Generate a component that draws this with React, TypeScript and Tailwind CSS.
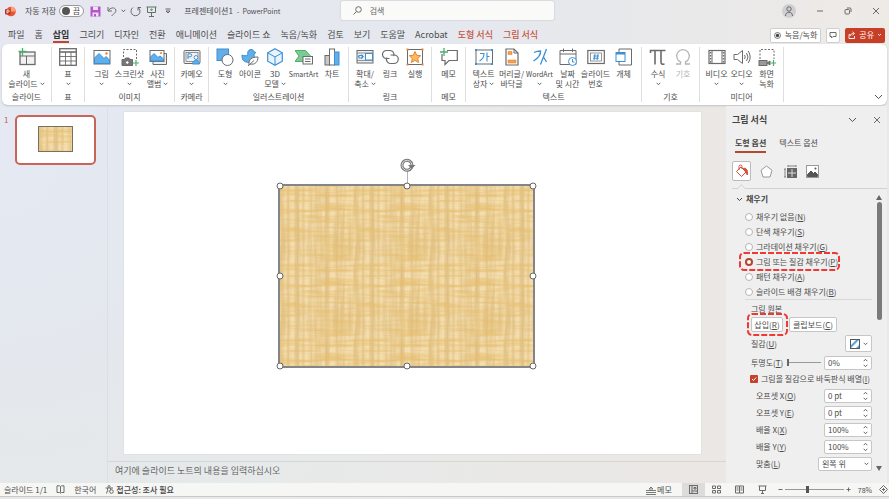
import React from "react";

type Kids = { children?: React.ReactNode };

const G = "#6b6b6b";
const B = "#3b8fd6";

function Ico({ children, s = 18 }: Kids & { s?: number }) {
  return (
    <svg width={s} height={s} viewBox={`0 0 ${s} ${s}`} fill="none" stroke={G} strokeWidth="1" aria-hidden="true" className="shrink-0">
      {children}
    </svg>
  );
}

function Chevron({ className = "" }: { className?: string }) {
  return (
    <svg width="5" height="4" viewBox="0 0 5 4" fill="none" stroke="#555" strokeWidth="0.9" aria-hidden="true" className={`shrink-0 ${className}`}>
      <path d="M0.7 0.8 2.5 2.7 4.3 0.8" />
    </svg>
  );
}

function BigChevron() {
  return (
    <svg width="9" height="6" viewBox="0 0 9 6" fill="none" stroke="#555" strokeWidth="1" aria-hidden="true">
      <path d="M1 1 4.5 4.6 8 1" />
    </svg>
  );
}

const icons: Record<string, React.ReactNode> = {
  newSlide: (
    <Ico>
      <rect x="2" y="4" width="15" height="12.500" fill="#f2f2f2" strokeWidth="1.3" />
      <path d="M2 8h15M8.5 8V16.500" />
      <path d="M4.500 0v8M0.5 3.500h8" stroke="#4caf6a" strokeWidth="1.3" />
    </Ico>
  ),
  table: (
    <Ico>
      <rect x="0.7" y="0.7" width="16.6" height="16.6" fill="#fff" strokeWidth="1.3" />
      <path d="M1 4h16" strokeWidth="1.6" />
      <path d="M1 8.5h16M1 13h16M6.500 4v14M12 4v14" strokeWidth="0.9" />
    </Ico>
  ),
  picture: (
    <Ico>
      <rect x="1" y="2.5" width="16" height="13.5" fill="#fff" />
      <path d="M1.5 10 6 5.5l5 5 2-2 3.500 3.500v3.500h-15z" fill="#62aee8" stroke={B} />
      <circle cx="13.500" cy="5.500" r="1.200" fill="#e8823a" stroke="none" />
    </Ico>
  ),
  screenshot: (
    <Ico>
      <path d="M2.500 9V1.500h13V11" strokeDasharray="2 1.500" />
      <path d="M1 11.500h2.500l1-1.500h3.500l1 1.500h2.500v6H1z" fill="#777" />
      <circle cx="6.300" cy="14.500" r="1.800" fill="#fff" />
      <path d="M15 12v6M12 15h6" stroke="#4caf6a" strokeWidth="1.200" />
    </Ico>
  ),
  album: (
    <Ico>
      <path d="M4 14v2.500h13.500V5.500H15" fill="#eee" />
      <rect x="1" y="2.500" width="14" height="11" fill="#fff" />
      <path d="M1.500 9 5 5.500l4 4 2-1.500 3.500 3v2h-13z" fill="#62aee8" stroke={B} />
      <circle cx="12" cy="5" r="1" fill="#e8823a" stroke="none" />
    </Ico>
  ),
  cameo: (
    <Ico>
      <rect x="1" y="2.500" width="16" height="13" rx="1" fill="#f1f1f1" />
      <rect x="3" y="4.500" width="12" height="9" strokeWidth="0.700" />
      <path d="M5 11V5.800h2.200a1.500 1.500 0 0 1 0 3H5" stroke={B} />
      <circle cx="13" cy="9.500" r="1.900" fill="#fff" stroke={B} />
      <path d="M9.500 16c0-5 7-5 7 0z" fill="#62aee8" stroke={B} />
    </Ico>
  ),
  shapes: (
    <Ico>
      <rect x="1" y="1" width="11.500" height="11.500" fill="#62aee8" stroke={B} />
      <circle cx="11.500" cy="12" r="5.500" fill="#fff" />
    </Ico>
  ),
  duck: (
    <Ico>
      <path d="M1 7c2 1 4 1 6 0-1-2 0-5.500 3-5.500 2 0 3 1.300 3 2.500l2 .5-2 1.500c0 2 2 4-1 7-3 2.500-8 1.500-10-1-1-1.500-1-3-1-5z" fill="#62aee8" stroke={B} />
      <path d="M8 17c-.5-6 3-8 9-8 0 5-3 8-8 7M7 18l6-5.500" fill="#fff" />
    </Ico>
  ),
  cube: (
    <Ico>
      <path d="M9 .8 16.300 4.800v8.400L9 17.200 1.700 13.200V4.800z" fill="#e9f4fc" stroke={B} strokeWidth="1.200" />
      <path d="M1.700 4.800 9 9l7.300-4.200M9 9v8" stroke={B} />
    </Ico>
  ),
  smartart: (
    <Ico>
      <path d="M0 2.500h10.500l5 5.500-5 5.500H0L4 8z" fill="#7ccb94" stroke="#4caf6a" />
      <rect x="8" y="8.500" width="9.500" height="7.500" fill="#fff" />
      <path d="M10 11h5.500M10 13.500h5.500" />
    </Ico>
  ),
  chart: (
    <Ico>
      <rect x="2" y="7.500" width="4.500" height="9.500" fill="#c9c9c9" />
      <rect x="6.500" y="1" width="5" height="16" fill="#fff" />
      <rect x="11.500" y="4" width="4.500" height="13" fill="#62aee8" stroke={B} />
    </Ico>
  ),
  zoom: (
    <Ico>
      <rect x="1" y="2.500" width="16" height="12.500" fill="#eee" />
      <path d="M1 5h16M1 12.500h16" strokeWidth=".7" />
      <path d="M2 8.500h5M5.500 6.500l2 2-2 2" stroke={B} />
      <rect x="9.500" y="5.500" width="7" height="6.500" fill="#fff" stroke={B} />
      <rect x="3" y="7.500" width="3" height="2.500" fill="#fff" stroke={B} />
    </Ico>
  ),
  link: (
    <Ico>
      <path d="M8.500 10.500H5.500a4 4 0 0 1 0-8H9a4 4 0 0 1 3.700 5.500" strokeWidth="1.200" />
      <path d="M9.500 7H13a4 4 0 0 1 0 8.500H9.500A4 4 0 0 1 6 9.500" strokeWidth="1.200" />
    </Ico>
  ),
  action: (
    <Ico>
      <rect x="1.500" y="1.500" width="15" height="15" fill="#fff" />
      <path d="m9 3.500 1.700 3.800 4 .4-3 2.800.9 4L9 12.400l-3.600 2.100.9-4-3-2.800 4-.4z" fill="#f8bd57" stroke="#e8823a" />
      <path d="M.5.500h2v2h-2zM15.500.500h2v2h-2zM.5 15.500h2v2h-2zM15.500 15.500h2v2h-2z" fill="#e8823a" stroke="none" />
    </Ico>
  ),
  comment: (
    <Ico>
      <path d="M2 6v6.500h3V16.500L9 12.500h8.300V2.500H7" fill="#fff" strokeWidth="1.200" />
      <path d="M4 0v8M0 4h8" stroke="#4caf6a" strokeWidth="1.300" />
    </Ico>
  ),
  textbox: (
    <Ico>
      <rect x="1" y="2" width="16.500" height="14" fill="#fff" stroke={G} />
      <path d="M5 5.500h4c0 3-1.500 6-4.500 7.500M12 4.500V13.500M12 8.500h2.500" stroke={B} strokeWidth="1.100" />
      <path d="M0 1h2v2H0zM16 1h2v2h-2zM0 15h2v2H0zM16 15h2v2h-2z" fill={B} stroke="none" />
    </Ico>
  ),
  header: (
    <Ico>
      <path d="M3 1h8l4 4v12H3z" fill="#fff" strokeWidth="1.200" />
      <path d="M11 1v4h4" />
      <path d="M5 3.500h4v3H5zM5 12h8v3H5z" fill="#f5a04a" stroke="#e8823a" strokeWidth=".6" />
    </Ico>
  ),
  wordart: (
    <Ico>
      <path d="M3 4.500c3-1.500 5-1.500 6.500-1.500C10 7 6.500 10.500 2.500 13" stroke={B} strokeWidth="1.300" />
      <path d="M15.500 1 9.500 16.500M12.500 9l3 5" stroke={B} strokeWidth="1.300" />
    </Ico>
  ),
  date: (
    <Ico>
      <path d="M1 2.500h16v14H1z" fill="#fff" />
      <path d="M1 6h16M4.500.500v3.500M13.500.500v3.500" />
      <circle cx="13.500" cy="13.500" r="4" fill="#fff" stroke={B} />
      <path d="M13.500 11v3h2" stroke={B} />
    </Ico>
  ),
  number: (
    <Ico>
      <rect x=".800" y="2.500" width="16.500" height="13" fill="#fff" strokeWidth="1.200" />
      <rect x="3.500" y="5" width="11" height="8" strokeWidth=".7" />
      <path d="M8 6 7 12M11 6l-1 6M6.200 8h5.800M6 10.200h5.800" stroke={B} />
    </Ico>
  ),
  object: (
    <Ico>
      <path d="M4 4V1h12.500v16H4v-3" fill="#fff" />
      <rect x="1" y="4.500" width="9" height="9" fill="#fff" stroke={B} />
      <path d="M1 5.500h9" stroke={B} strokeWidth="2" />
    </Ico>
  ),
  pi: (
    <Ico>
      <path d="M1.500 5V2.500h15M6 2.500V16.500M12 2.500V14c0 2 1 2.500 3.500 2" strokeWidth="1.600" />
    </Ico>
  ),
  omega: (
    <Ico>
      <path d="M2 16h4.500v-2.200A6.300 6.300 0 1 1 11.500 13.800V16H16" stroke="#b5b5b5" strokeWidth="1.300" />
    </Ico>
  ),
  video: (
    <Ico>
      <rect x="1" y="2.500" width="16" height="13" fill="#fff" strokeWidth="1.200" />
      <path d="M4 3v12M14 3v12" />
      <path d="M2.500 4v11M15.500 4v11" strokeDasharray="1.500 1.500" strokeWidth="1.400" />
    </Ico>
  ),
  audio: (
    <Ico>
      <path d="M1 6.500h3.500L9.500 2.500v13L4.500 11.500H1z" fill="#fff" />
      <path d="M11.500 7q1.500 2 0 4M13.500 5q3 4 0 8M15.200 3q4 6 0 12" />
    </Ico>
  ),
  record: (
    <Ico>
      <path d="M2 11V1.500h14V11" strokeDasharray="2 1.500" />
      <rect x="1" y="12.500" width="8" height="5" fill="#999" />
      <path d="M9 15 12 13v4z" fill="#777" />
      <path d="M15.500 12v6M12.500 15h6" stroke="#4caf6a" strokeWidth="1.200" />
    </Ico>
  ),
};

type Item = { icon: string; a: string; b?: string; drop?: boolean; w: string; muted?: boolean; latin?: boolean };
type GroupData = { label: string; w: string; items: Item[] };

const W25 = "w-[25px]";
const W28 = "w-7";
const groups: GroupData[] = [
  { label: "슬라이드", w: "w-[50px]", items: [{ icon: "newSlide", a: "새", b: "슬라이드", drop: true, w: "w-10" }] },
  { label: "표", w: "w-[33px]", items: [{ icon: "table", a: "표", drop: true, w: W28 }] },
  {
    label: "이미지", w: "w-[90px]", items: [
      { icon: "picture", a: "그림", drop: true, w: W28 },
      { icon: "screenshot", a: "스크린샷", drop: true, w: W28 },
      { icon: "album", a: "사진", b: "앨범", drop: true, w: W28 },
    ],
  },
  { label: "카메라", w: "w-[34px]", items: [{ icon: "cameo", a: "카메오", drop: true, w: W28 }] },
  {
    label: "일러스트레이션", w: "w-[140px]", items: [
      { icon: "shapes", a: "도형", drop: true, w: W25 },
      { icon: "duck", a: "아이콘", w: W25 },
      { icon: "cube", a: "3D", b: "모델", drop: true, w: W25 },
      { icon: "smartart", a: "SmartArt", w: "w-8", latin: true },
      { icon: "chart", a: "차트", w: W25 },
    ],
  },
  {
    label: "링크", w: "w-[83px]", items: [
      { icon: "zoom", a: "확대/", b: "축소", drop: true, w: W25 },
      { icon: "link", a: "링크", w: W25 },
      { icon: "action", a: "실행", w: W25 },
    ],
  },
  { label: "메모", w: "w-[34px]", items: [{ icon: "comment", a: "메모", w: W28 }] },
  {
    label: "텍스트", w: "w-[176px]", items: [
      { icon: "textbox", a: "텍스트", b: "상자", drop: true, w: W28 },
      { icon: "header", a: "머리글/", b: "바닥글", w: W28 },
      { icon: "wordart", a: "WordArt", drop: true, w: W28, latin: true },
      { icon: "date", a: "날짜", b: "및 시간", w: W28 },
      { icon: "number", a: "슬라이드", b: "번호", w: W28 },
      { icon: "object", a: "개체", w: W28 },
    ],
  },
  {
    label: "기호", w: "w-[58px]", items: [
      { icon: "pi", a: "수식", drop: true, w: W25 },
      { icon: "omega", a: "기호", w: W25, muted: true },
    ],
  },
  {
    label: "미디어", w: "w-[84px]", items: [
      { icon: "video", a: "비디오", drop: true, w: W25 },
      { icon: "audio", a: "오디오", drop: true, w: W25 },
      { icon: "record", a: "화면", b: "녹화", w: W25 },
    ],
  },
];

function RibbonButton({ it }: { it: Item }) {
  return (
    <button className={`flex flex-col items-center ${it.w} ${it.muted ? "text-[#b5b5b5]" : ""}`}>
      {icons[it.icon]}
      <span className={`mt-[3px] h-2.5 whitespace-nowrap ${it.latin ? "text-[7px]" : ""}`}>{it.a}</span>
      <span className="flex h-2.5 items-center gap-0.5 whitespace-nowrap">
        {it.b}
        {it.drop && <Chevron />}
      </span>
    </button>
  );
}

function TitleBar() {
  return (
    <header className="flex h-[22px] shrink-0 items-center">
      <div className="flex min-w-0 flex-[103] items-center pl-[5px] whitespace-nowrap">
        <svg width="11" height="11" viewBox="0 0 11 11" aria-hidden="true">
          <circle cx="6" cy="5.500" r="4.800" fill="#e8562f" />
          <path d="M6 .7a4.800 4.800 0 0 1 4.800 4.800H6z" fill="#f7a17c" />
          <rect x="0" y="3" width="5.500" height="5.500" rx="1" fill="#b8301c" />
          <path d="M2 7.500V4h1.200a1 1 0 0 1 0 2.200H2" stroke="#fff" strokeWidth=".8" fill="none" />
        </svg>
        <span className="ml-[9px]">자동 저장</span>
        <button aria-label="자동 저장" className="ml-[3px] flex h-3 w-[25px] items-center justify-between rounded-full border border-[#999] bg-white pr-[3px] pl-[2px]">
          <span className="size-2 rounded-full bg-[#555]" />
          <span>끔</span>
        </button>
        <button aria-label="저장" className="ml-1.5">
          <svg width="11" height="11" viewBox="0 0 11 11" aria-hidden="true">
            <path d="M.5.500h10v10H.500z" fill="#b458c8" />
            <path d="M3 .5h5v3.500H3zM2.500 6.500h6v4h-6z" fill="#f1ddf5" />
            <path d="M4 8h2v2.500H4z" fill="#b458c8" />
          </svg>
        </button>
        <button aria-label="실행 취소" className="ml-1.5 flex items-center gap-1">
          <Ico s={10}>
            <path d="M1 1v4h4M1.200 4.800C3 1.500 8 .8 8.800 4c.6 2.500-2 3.500-4.300 6" />
          </Ico>
          <Chevron />
        </button>
        <button aria-label="다시 실행" className="ml-1">
          <Ico s={11}>
            <path d="M3 1.500a4.500 4.500 0 1 0 5 0M8 4.500v-3h3" />
          </Ico>
        </button>
        <button aria-label="슬라이드 쇼" className="ml-[5px]">
          <Ico s={11}>
            <path d="M.5 1h10M1.500 1v5.500h8V1M5.500 6.500v4M3 10.500h5" />
            <path d="M5.500 2.500v2.500M4 3.700h3" stroke="#4caf6a" />
          </Ico>
        </button>
        <button aria-label="빠른 실행 도구 모음" className="ml-2">
          <svg width="6" height="6" viewBox="0 0 6 6" fill="none" stroke="#666" aria-hidden="true">
            <path d="M.5 1h5M1 3l2 2 2-2z" />
          </svg>
        </button>
        <h1 className="ml-[13px] flex gap-1">
          프레젠테이션1 <span className="text-[7px]">-&nbsp; PowerPoint</span>
        </h1>
      </div>
      <label className="mt-px flex h-[19px] w-[24%] items-center gap-2 self-start rounded-xs bg-[#fafaf9] px-3 shadow-[0_0_2px_#b8b8c0]">
        <Ico s={9}>
          <circle cx="5.500" cy="3.500" r="2.800" />
          <path d="M3.500 5.500.500 8.500" />
        </Ico>
        <input type="text" placeholder="검색" aria-label="검색" className="min-w-0 flex-1 bg-transparent text-[8px] outline-none placeholder:text-[#666]" />
      </label>
      <div className="flex flex-[100] items-center justify-end gap-5 pr-[9px]">
        <button aria-label="계정" className="flex size-3.5 items-center justify-center rounded-full bg-[#cfcfd1]">
          <Ico s={10}>
            <circle cx="5" cy="3" r="2.200" />
            <path d="M1.500 10c0-5 7-5 7 0" />
          </Ico>
        </button>
        <button aria-label="최소화"><Ico s={8}><path d="M1 4h6" /></Ico></button>
        <button aria-label="이전 크기로"><Ico s={8}><rect x="1" y="2.500" width="4.500" height="4.500" rx="1" /><path d="M3 1h3a1 1 0 0 1 1 1v3" /></Ico></button>
        <button aria-label="닫기"><Ico s={8}><path d="m1 1 6 6M7 1 1 7" /></Ico></button>
      </div>
    </header>
  );
}

const tabs = ["파일", "홈", "삽입", "그리기", "디자인", "전환", "애니메이션", "슬라이드 쇼", "녹음/녹화", "검토", "보기", "도움말", "Acrobat", "도형 서식", "그림 서식"];

function TabRow() {
  return (
    <div className="flex h-[22px] shrink-0 items-center justify-between pt-1 pr-1 pl-2">
      <nav className="flex gap-2.5 text-[9px] whitespace-nowrap">
        {tabs.map((t) => (
          <a
            key={t}
            href="#"
            className={`h-4 pt-[3px] ${t === "삽입" ? "border-b-2 border-[#c2452f] font-bold text-[#333]" : t.endsWith("서식") ? "font-medium text-[#c8543f]" : ""}`}
          >
            {t}
          </a>
        ))}
      </nav>
      <div className="flex gap-[5px] whitespace-nowrap">
        <button className="flex h-[15px] items-center gap-1 rounded-xs border border-[#cfcfcf] bg-white px-[3px]">
          <svg width="7" height="7" viewBox="0 0 7 7" aria-hidden="true">
            <circle cx="3.500" cy="3.500" r="3" fill="none" stroke="#555" strokeWidth=".8" />
            <circle cx="3.500" cy="3.500" r="1.700" fill="#444" />
          </svg>
          녹음/녹화
        </button>
        <button aria-label="메모" className="flex h-[15px] w-3.5 items-center justify-center rounded-xs border border-[#cfcfcf] bg-white">
          <Ico s={8}><path d="M1 1.500h6v4H4L2.500 7V5.500H1z" /></Ico>
        </button>
        <button className="flex h-[15px] items-center gap-[3px] rounded-xs bg-[#c73f27] px-[3px] text-white">
          <svg width="8" height="8" viewBox="0 0 8 8" fill="none" stroke="#fff" strokeWidth=".9" aria-hidden="true">
            <path d="M2 3.500H1v4h5.500V5M2.500 5c0-2 1-2.500 3-2.500M4.500.800l2 1.700-2 1.700" />
          </svg>
          공유
          <svg width="5" height="4" viewBox="0 0 5 4" fill="none" stroke="#fff" strokeWidth=".9" aria-hidden="true"><path d="m1 1 1.500 1.500L4 1" /></svg>
        </button>
      </div>
    </div>
  );
}

function Ribbon() {
  return (
    <section className="mx-0.5 flex h-[61px] shrink-0 rounded-md bg-white py-[3px] shadow-[0_1px_2px_#bfc2c6]">
      {groups.map((g) => (
        <div key={g.label} className={`flex shrink-0 flex-col items-center justify-between border-r border-[#dedede] pt-px ${g.w}`}>
          <div className="flex justify-center">
            {g.items.map((it) => <RibbonButton key={it.a} it={it} />)}
          </div>
          <span>{g.label}</span>
        </div>
      ))}
      <div className="flex flex-1 items-end justify-end pr-1 pb-0.5">
        <button aria-label="리본 접기"><BigChevron /></button>
      </div>
    </section>
  );
}

function Papyrus({ id, className }: { id: string; className?: string }) {
  return (
    <svg width="100%" height="100%" className={className} aria-hidden="true">
      <defs>
        <filter id={`${id}v`} x="0" y="0" width="100%" height="100%" colorInterpolationFilters="sRGB">
          <feTurbulence type="fractalNoise" baseFrequency="0.2 0.014" numOctaves="3" seed="4" stitchTiles="stitch" />
          <feColorMatrix values="0 0 0 0 0.80  0 0 0 0 0.66  0 0 0 0 0.42  1.3 0 0 0 -0.42" />
        </filter>
        <filter id={`${id}h`} x="0" y="0" width="100%" height="100%" colorInterpolationFilters="sRGB">
          <feTurbulence type="fractalNoise" baseFrequency="0.027 0.27" numOctaves="3" seed="9" stitchTiles="stitch" />
          <feColorMatrix values="0 0 0 0 0.90  0 0 0 0 0.74  0 0 0 0 0.42  1.6 0 0 0 -0.52" />
        </filter>
        <pattern id={id} width="75" height="75" patternUnits="userSpaceOnUse">
          <rect width="75" height="75" fill="#f5dfb0" />
          <rect width="75" height="75" filter={`url(#${id}v)`} />
          <rect width="75" height="75" filter={`url(#${id}h)`} />
        </pattern>
      </defs>
      <rect width="100%" height="100%" fill={`url(#${id})`} />
    </svg>
  );
}

const handles = [
  "left-0 top-0", "left-1/2 top-0", "left-full top-0",
  "left-0 top-1/2", "left-full top-1/2",
  "left-0 top-full", "left-1/2 top-full", "left-full top-full",
];

function Canvas() {
  return (
    <main className="flex min-w-0 flex-1 flex-col">
      <div className="flex flex-1 pt-1.5 pr-[25px] pb-[7px] pl-4">
        <div className="relative flex-1 bg-white shadow-[0_0_1px_#c4c4c4]">
          <div className="absolute inset-x-[26.7%] top-[21%] h-[54%] w-[44.6%] border-2 border-[#858585]">
            <Papyrus id="papyrus" className="block" />
            <span className="absolute bottom-full left-1/2 h-4 w-px bg-[#b5b5b5]" />
            <svg width="16" height="14" viewBox="0 0 16 14" fill="none" aria-hidden="true" className="absolute bottom-full left-1/2 mb-3.5 -ml-[7px]">
              <path d="M11.500 9.500A5 5 0 1 1 12 7" stroke="#777" strokeWidth="3" />
              <path d="M11.500 9.500A5 5 0 1 1 12 7" stroke="#ddd" strokeWidth="1" />
              <path d="M8 7h7.500l-3.700 4z" fill="#777" />
            </svg>
            {handles.map((h) => (
              <span key={h} className={`absolute size-[7px] -translate-1/2 rounded-full border border-[#666] bg-white ${h}`} />
            ))}
          </div>
        </div>
      </div>
      <div className="h-[22px] shrink-0 border-t border-[#d6d6d5] pt-1 pl-[7px] text-[9px] text-[#666]">여기에 슬라이드 노트의 내용을 입력하십시오</div>
    </main>
  );
}

function Dashed({ className }: { className: string }) {
  return (
    <svg className={`pointer-events-none absolute ${className}`} aria-hidden="true">
      <rect x="1" y="1" rx="4" className="[height:calc(100%-2px)] [width:calc(100%-2px)]" fill="none" stroke="#ee3a34" strokeWidth="2" strokeDasharray="6 2" />
    </svg>
  );
}

const Key = ({ children }: Kids) => <>(<u>{children}</u>)</>;

const fills = [
  ["채우기 없음", "N"], ["단색 채우기", "S"], ["그라데이션 채우기", "G"],
  ["그림 또는 질감 채우기", "P"], ["패턴 채우기", "A"], ["슬라이드 배경 채우기", "B"],
];

function Spin({ id, value }: { id: string; value: string }) {
  return (
    <div className="flex h-3.5 w-12 items-center rounded-xs border border-[#c6c6c6] bg-white px-[3px]">
      <input id={id} type="text" defaultValue={value} className="min-w-0 flex-1 bg-transparent outline-none" />
      <span className="flex flex-col gap-0.5">
        <Chevron className="rotate-180" />
        <Chevron />
      </span>
    </div>
  );
}

const offsets = [["오프셋 X", "O", "0 pt"], ["오프셋 Y", "E", "0 pt"], ["배율 X", "X", "100%"], ["배율 Y", "Y", "100%"]];

function FormatPane() {
  return (
    <aside className="flex w-[161px] shrink-0 flex-col bg-[#efefef] pl-1.5">
      <div className="mt-2 flex h-3 items-center justify-between pr-1.5">
        <h2 className="text-[9px] font-bold text-[#444]">그림 서식</h2>
        <div className="flex items-center gap-4">
          <button aria-label="옵션"><BigChevron /></button>
          <button aria-label="닫기"><Ico s={8}><path d="m1 1 6 6M7 1 1 7" /></Ico></button>
        </div>
      </div>
      <div className="mt-3 ml-[3px] flex gap-[13px]">
        <button className="h-[15px] border-b-2 border-[#b5482f] pb-[3px] font-bold text-[#444]">도형 옵션</button>
        <button className="h-[15px] pb-[5px]">텍스트 옵션</button>
      </div>
      <div className="mt-2 flex items-center gap-[9px]">
        <button aria-label="채우기 및 선" className="flex h-5 w-[19px] items-center justify-center rounded-xs border border-[#bbb] bg-white">
          <svg width="14" height="14" viewBox="0 0 14 14" fill="none" stroke="#d5503c" aria-hidden="true">
            <path d="m6 3 5 5-4.500 4.500L1.500 7.500zM4 6V2.500a1.500 1.500 0 0 1 3 0V5" />
            <path d="M8 4.500c3-1 5 1 4.500 6.500-1.500-1-1.500-3-2.500-4z" fill="#d5503c" />
          </svg>
        </button>
        <button aria-label="효과"><Ico s={13}><path d="M6.500 1 12 5.300 10 12H3L1 5.300z" fill="#fff" stroke="#999" /></Ico></button>
        <button aria-label="크기 및 속성" className="ml-0.5">
          <Ico s={13}>
            <path d="M4 1h8M4 0v2M12 0v2M1 4v8M0 4h2M0 12h2" strokeWidth=".8" />
            <rect x="3.500" y="3.500" width="9" height="9" fill="#666" stroke="#666" />
            <path d="M8 4v8M4 8h8" stroke="#ddd" />
          </Ico>
        </button>
        <button aria-label="그림">
          <Ico s={13}>
            <rect x=".5" y=".5" width="12" height="12" fill="#fff" stroke="#999" />
            <path d="M1.500 11.500v-2L5 6l2.500 2.500L9 7l2.500 2.500v2z" fill="#555" stroke="#555" />
            <circle cx="9.500" cy="3.500" r="1" fill="#555" stroke="none" />
          </Ico>
        </button>
      </div>
      <svg width="100%" height="5" className="mt-[3px] shrink-0" fill="none" stroke="#d2d2d2" aria-hidden="true">
        <path d="M0 4.500h6l3.500-4 3.500 4h142" />
      </svg>
      <div className="flex flex-1 pr-[5px]">
        <div className="min-w-0 flex-1 pt-1 pr-1">
          <button className="ml-1 flex h-3 items-center gap-[3px] text-[8px] font-bold text-[#444]">
            <svg width="7" height="5" viewBox="0 0 7 5" fill="none" stroke="#444" aria-hidden="true"><path d="m1 1 2.500 2.500L6 1" /></svg>
            채우기
          </button>
          <div className="mt-1 ml-[13px]">
            {fills.map(([t, k]) => (
              <label key={k} className="relative flex h-[15px] items-center gap-[3px] whitespace-nowrap">
                <input
                  type="radio"
                  name="fill"
                  defaultChecked={k === "P"}
                  className="size-2 appearance-none rounded-full border border-[#b5b5b5] bg-white checked:border-2 checked:border-[#b5432e]"
                />
                <span>{t}<Key>{k}</Key></span>
                {k === "P" && <Dashed className="-top-0.5 -left-1.5 h-[19px] w-[101px]" />}
              </label>
            ))}
          </div>
          <div className="ml-[13px] border-t border-[#d8d8d8] pt-[3px]">
            <p className="ml-1.5 h-3 leading-3">그림 원본</p>
            <div className="mt-0.5 ml-1.5 flex gap-1.5">
              <div className="relative">
                <button className="h-[15px] w-8 rounded-xs border border-[#c6c6c6] bg-white">삽입<Key>R</Key></button>
                <Dashed className="-top-1 -left-1 h-[23px] w-[41px]" />
              </div>
              <button className="h-[15px] w-12 rounded-xs border border-[#c6c6c6] bg-white whitespace-nowrap">클립보드<Key>C</Key></button>
            </div>
            <div className="mt-[3px] ml-1.5 flex h-[17px] items-center justify-between">
              <span>질감<Key>U</Key></span>
              <button aria-label="질감" className="flex h-[17px] w-[27px] items-center justify-center gap-[3px] rounded-xs border border-[#c6c6c6] bg-white">
                <svg width="10" height="10" viewBox="0 0 10 10" aria-hidden="true">
                  <rect x=".5" y=".5" width="9" height="9" fill="#fff" stroke="#555" />
                  <path d="M1 9V6l5-5h3zM6 9l3-3v3z" fill="#5aa2dc" />
                </svg>
                <Chevron />
              </button>
            </div>
            <div className="mt-[3px] ml-1.5 flex h-[15px] items-center justify-between">
              <label htmlFor="alpha">투명도<Key>T</Key></label>
              <input
                type="range"
                defaultValue={0}
                aria-label="투명도"
                className="h-2 w-[34px] appearance-none bg-[linear-gradient(#999,#999)] bg-[length:100%_1px] bg-center bg-no-repeat [&::-webkit-slider-thumb]:h-[7px] [&::-webkit-slider-thumb]:w-0.5 [&::-webkit-slider-thumb]:appearance-none [&::-webkit-slider-thumb]:bg-[#666]"
              />
              <Spin id="alpha" value="0%" />
            </div>
            <label className="ml-[5px] flex h-[17px] items-center gap-[3px] whitespace-nowrap">
              <span className="relative flex">
                <input type="checkbox" defaultChecked className="size-2 appearance-none rounded-[1px] bg-[#c5412b]" />
                <svg width="8" height="8" viewBox="0 0 8 8" fill="none" stroke="#fff" className="absolute inset-0" aria-hidden="true"><path d="m2 4 1.500 1.500L6.200 2.500" /></svg>
              </span>
              <span>그림을 질감으로 바둑판식 배열<Key>I</Key></span>
            </label>
            {offsets.map(([t, k, v]) => (
              <div key={k} className="ml-[11px] flex h-[17px] items-center justify-between">
                <label htmlFor={`f${k}`}>{t}<Key>{k}</Key></label>
                <Spin id={`f${k}`} value={v} />
              </div>
            ))}
            <div className="ml-[11px] flex h-[17px] items-center justify-between">
              <label htmlFor="align">맞춤<Key>L</Key></label>
              <span className="relative">
                <select id="align" className="block h-3.5 w-[54px] appearance-none rounded-xs border border-[#c6c6c6] bg-white pl-[3px]">
                  <option>왼쪽 위</option>
                </select>
                <Chevron className="pointer-events-none absolute top-[5px] right-[3px]" />
              </span>
            </div>
          </div>
        </div>
        <div className="flex w-1.5 flex-col items-center pt-1.5 pb-3">
          <svg width="6" height="5" viewBox="0 0 6 5" fill="#666" aria-hidden="true"><path d="M3 0 6 5H0z" /></svg>
          <div className="mt-0.5 h-[118px] w-[5px] rounded-full bg-[#7a7a7a]" />
          <svg width="6" height="5" viewBox="0 0 6 5" fill="#666" aria-hidden="true" className="mt-auto"><path d="M3 5 6 0H0z" /></svg>
        </div>
      </div>
    </aside>
  );
}

function StatusBar() {
  return (
    <footer className="flex h-3.5 shrink-0 items-center border-b border-[#c9c9c9] bg-[#f6f6f5] pl-1 whitespace-nowrap">
      <span>슬라이드 1/1</span>
      <button aria-label="맞춤법" className="ml-[9px]"><Ico s={9}><path d="M4.500 1.500v6M1 .800h2.500l1 .7 1-.7H8v6.700H5.500l-1 .7-1-.7H1z" /></Ico></button>
      <span className="ml-[9px]">한국어</span>
      <button className="ml-[9px] flex items-center gap-0.5 font-medium text-[#444]">
        <Ico s={9}>
          <circle cx="4" cy="1.500" r="1" />
          <path d="M.5 3h7.500M2.500 3v2.500L1.500 8.500M5.500 3v2M4 5.500v1" />
          <circle cx="6.500" cy="6.500" r="1.800" />
        </Ico>
        접근성: 조사 필요
      </button>
      <div className="ml-auto flex h-full items-center">
        <button className="flex items-center gap-px">
          <Ico s={10}><path d="M0 5.500h10M0 7.500h10M0 9.500h10M3 4l2-2 2 2z" strokeWidth=".9" /></Ico>
          메모
        </button>
        <button aria-label="기본" className="ml-2.5 flex h-full w-[23px] items-center justify-center bg-[#dcdcdc]">
          <Ico s={9}><rect x=".5" y=".5" width="8" height="8" /><path d="M3 1v7M3 6h5" /><path d="M5 2.500h2V4H5z" /></Ico>
        </button>
        <button aria-label="여러 슬라이드" className="ml-[7px]"><Ico s={9}><path d="M.5 1h3v2.500h-3zM5.500 1h3v2.500h-3zM.5 5.500h3V8h-3zM5.500 5.500h3V8h-3z" /></Ico></button>
        <button aria-label="읽기용 보기" className="ml-3.5"><Ico s={9}><path d="M.5 1h8v7h-8zM4.500 1v7M1.500 3h2M1.500 5h2M5.500 3h2M5.500 5h2" /></Ico></button>
        <button aria-label="슬라이드 쇼" className="ml-3.5"><Ico s={9}><path d="M.5 1h8M1.500 1v4.500h6V1M4.500 5.500v3M3 8.500h3" /></Ico></button>
        <button aria-label="축소" className="ml-[11px]"><Ico s={5}><path d="M.5 2.500h4" /></Ico></button>
        <input
          type="range"
          defaultValue={37}
          aria-label="확대/축소"
          className="mx-0.5 h-2 w-[59px] appearance-none bg-[linear-gradient(#999,#999)] bg-[length:100%_1px] bg-center bg-no-repeat [&::-webkit-slider-thumb]:h-[7px] [&::-webkit-slider-thumb]:w-[3px] [&::-webkit-slider-thumb]:appearance-none [&::-webkit-slider-thumb]:bg-[#555]"
        />
        <button aria-label="확대"><Ico s={5}><path d="M.5 2.500h4M2.500.500v4" /></Ico></button>
        <span className="ml-[7px] text-[7px]">78%</span>
        <button aria-label="창에 맞춤" className="mr-px ml-[7px]"><Ico s={9}><path d="m4.500.500 4 4-4 4-4-4zM3 4.500h3M4.500 3v3" /></Ico></button>
      </div>
    </footer>
  );
}

export default function App() {
  return (
    <div className="flex h-screen flex-col overflow-hidden bg-[radial-gradient(circle_at_0%_30%,#e5e9f3_0%,#e4e8ee_22%,transparent_45%),linear-gradient(100deg,#e5e8e5_0%,#e7eaea_35%,#ebe7e4_85%)] pb-0.5 font-['Noto_Sans_CJK_KR','Noto_Sans',sans-serif] text-[8px] leading-[10px] text-[#4c4c4c]">
      <div className="bg-[linear-gradient(90deg,#e6e7f0_0%,#e5e8ee_55%,#eeeae6_100%)] pb-px">
        <TitleBar />
        <TabRow />
        <Ribbon />
      </div>
      <div className="flex min-h-0 flex-1 pr-0.5">
        <nav aria-label="슬라이드" className="flex w-[108px] shrink-0 items-start gap-[7px] border-r border-[#dcdfe3] pt-[9px] pl-1">
          <span className="text-[#d05a48]">1</span>
          <button aria-label="슬라이드 1" className="flex h-[50px] w-[81px] items-start rounded-[5px] border-2 border-[#c8655a] bg-white pt-[9px] pl-[21px]">
            <span className="block h-[26px] w-[35px] border border-[#77705f]"><Papyrus id="thumb" className="block" /></span>
          </button>
        </nav>
        <Canvas />
        <FormatPane />
      </div>
      <StatusBar />
    </div>
  );
}
